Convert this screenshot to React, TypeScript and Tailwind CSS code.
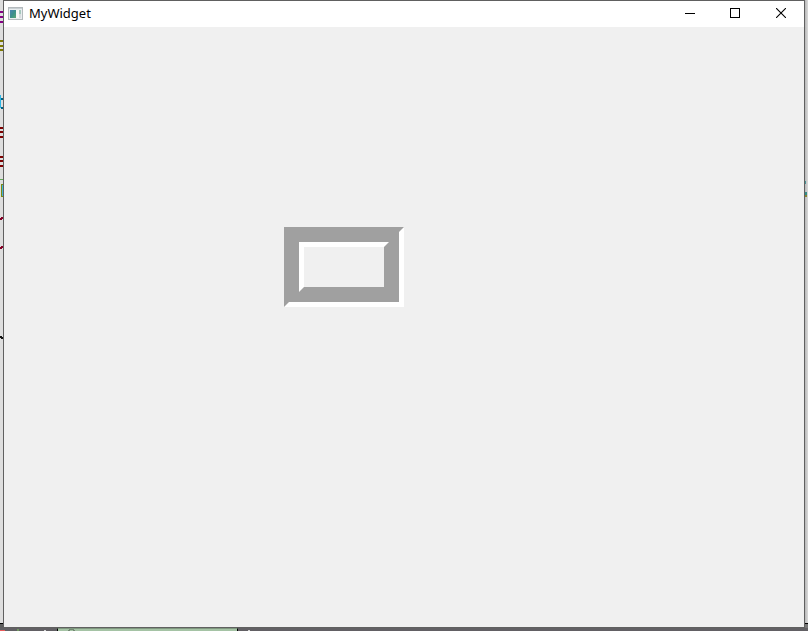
function AppIcon() {
  return (
    <svg width="15" height="13" viewBox="0 0 15 13" shapeRendering="crispEdges" aria-hidden="true">
      <defs>
        <linearGradient id="pane" x1="0" y1="0" x2="1" y2="1">
          <stop offset="0" stopColor="#4b83b5" />
          <stop offset="0.5" stopColor="#3c8f8c" />
          <stop offset="1" stopColor="#5aa873" />
        </linearGradient>
      </defs>
      <rect width="15" height="13" fill="#b4babd" />
      <rect x="1" y="1" width="13" height="11" fill="#e9eef0" />
      <rect x="1" y="1" width="13" height="1" fill="#c9d0d3" />
      <rect x="2" y="3" width="6" height="8" fill="url(#pane)" />
      <rect x="8" y="3" width="3" height="8" fill="#f8f8f8" />
      <rect x="11" y="3" width="2" height="4" fill="#a5c8bd" />
      <rect x="11" y="7" width="2" height="4" fill="#d8dcdf" />
    </svg>
  );
}

function TitleBar() {
  return (
    <header className="flex h-[26px] items-center bg-white pb-0.5 pl-1 text-black">
      <div className="flex flex-1 items-center gap-1.5">
        <AppIcon />
        <h1 className="text-[13px] leading-4">MyWidget</h1>
      </div>
      <button type="button" aria-label="Minimize" className="flex h-full w-[46px] items-center justify-center">
        <svg width="12" height="10" shapeRendering="crispEdges">
          <rect x="2" y="5" width="10" height="1" />
        </svg>
      </button>
      <button type="button" aria-label="Maximize" className="flex h-full w-[46px] items-center justify-center">
        <svg width="10" height="10" shapeRendering="crispEdges">
          <rect x="0.5" y="0.5" width="9" height="9" fill="none" stroke="black" />
        </svg>
      </button>
      <button type="button" aria-label="Close" className="flex h-full w-[46px] items-center justify-center">
        <svg width="10" height="10">
          <path d="M0 0L10 10M10 0L0 10" stroke="black" strokeWidth="1.1" />
        </svg>
      </button>
    </header>
  );
}

function Frame() {
  return (
    <div className="h-20 w-[120px] border-[5px] border-t-[#a0a0a0] border-r-white border-b-white border-l-[#a0a0a0]">
      <div className="h-full border-[10px] border-[#a0a0a0]">
        <div className="h-full border-[5px] border-t-white border-r-[#a0a0a0] border-b-[#a0a0a0] border-l-white" />
      </div>
    </div>
  );
}

function LeftEdge() {
  return (
    <svg width="3" height="400" shapeRendering="crispEdges" aria-hidden="true">
      <path d="M0 11h3v2H0zM0 16h3v2H0zM0 21h3v2H0z" fill="#850085" />
      <path d="M0 40h3v2H0zM0 45h3v2H0zM0 49h3v2H0z" fill="#7d7800" />
      <path d="M0 95h1v13H0z" fill="#2bb5e5" />
      <path d="M1 98h2v2H1zM1 107h2v2H1z" fill="#006080" />
      <path d="M0 127h3v2H0zM0 131h3v2H0zM0 136h3v2H0z" fill="#7d0000" />
      <path d="M0 156h3v2H0zM0 160h3v2H0zM0 165h3v2H0z" fill="#7d0000" />
      <path d="M0 179h3v1H0z" fill="#62a857" />
      <path d="M1 184h2v13H1z" fill="#7d8a10" />
      <path d="M2 185h1v11H2z" fill="#42b5d5" />
      <path d="M0 218h2v2H0zM1 217h2v2H1zM0 247h2v2H0zM1 246h2v2H1z" fill="#850025" />
      <path d="M0 336h2v2H0zM1 337h2v2H1z" fill="#111111" />
    </svg>
  );
}

function BottomEdge() {
  return (
    <div className="flex h-[3px] bg-[#626064]" aria-hidden="true">
      <svg width="57" height="3" shapeRendering="crispEdges">
        <rect y="2" width="5" height="1" fill="#e85b5b" />
        <rect x="17" y="1" width="2" height="2" fill="#6f9860" />
        <rect x="44" y="2" width="2" height="1" fill="#d5d5d5" />
      </svg>
      <div className="w-[181px] border-x border-t border-x-black border-t-[#7f987f] bg-[#a5c3a5]">
        <svg width="24" height="2" shapeRendering="crispEdges">
          <path d="M11 0h5v1h-5zM10 1h2v1h-2zM15 1h2v1h-2z" fill="#738973" />
        </svg>
      </div>
      <svg width="20" height="3" shapeRendering="crispEdges">
        <rect x="10" y="2" width="2" height="1" fill="#d5d5d5" />
      </svg>
    </div>
  );
}

export default function App() {
  return (
    <div className="flex h-screen flex-col overflow-hidden bg-[#d8d8d8] font-['Noto_Sans','Liberation_Sans',sans-serif]">
      <div className="flex min-h-0 flex-1">
        <div className="flex w-[3px] flex-col justify-between bg-[#dedede]">
          <LeftEdge />
          <div className="h-[5px] border-t border-black bg-[#5f5f5f]" />
        </div>
        <main className="flex min-w-0 flex-1 flex-col border border-[#606060] bg-[#f0f0f0]">
          <TitleBar />
          <section className="flex-1 pt-[200px] pl-[280px]">
            <Frame />
          </section>
        </main>
        <div className="flex w-[3px] flex-col justify-between bg-linear-to-r from-[#b8b8b8] to-[#dadada]">
          <svg width="3" height="200" shapeRendering="crispEdges" aria-hidden="true">
            <path d="M0 181h1v3H0z" fill="#4a9294" />
            <path d="M0 192h2v3H0z" fill="#348c88" />
            <path d="M0 195h2v2H0z" fill="#898431" />
          </svg>
          <div className="h-[5px] border-t border-black bg-[#777777]" />
        </div>
      </div>
      <BottomEdge />
    </div>
  );
}
